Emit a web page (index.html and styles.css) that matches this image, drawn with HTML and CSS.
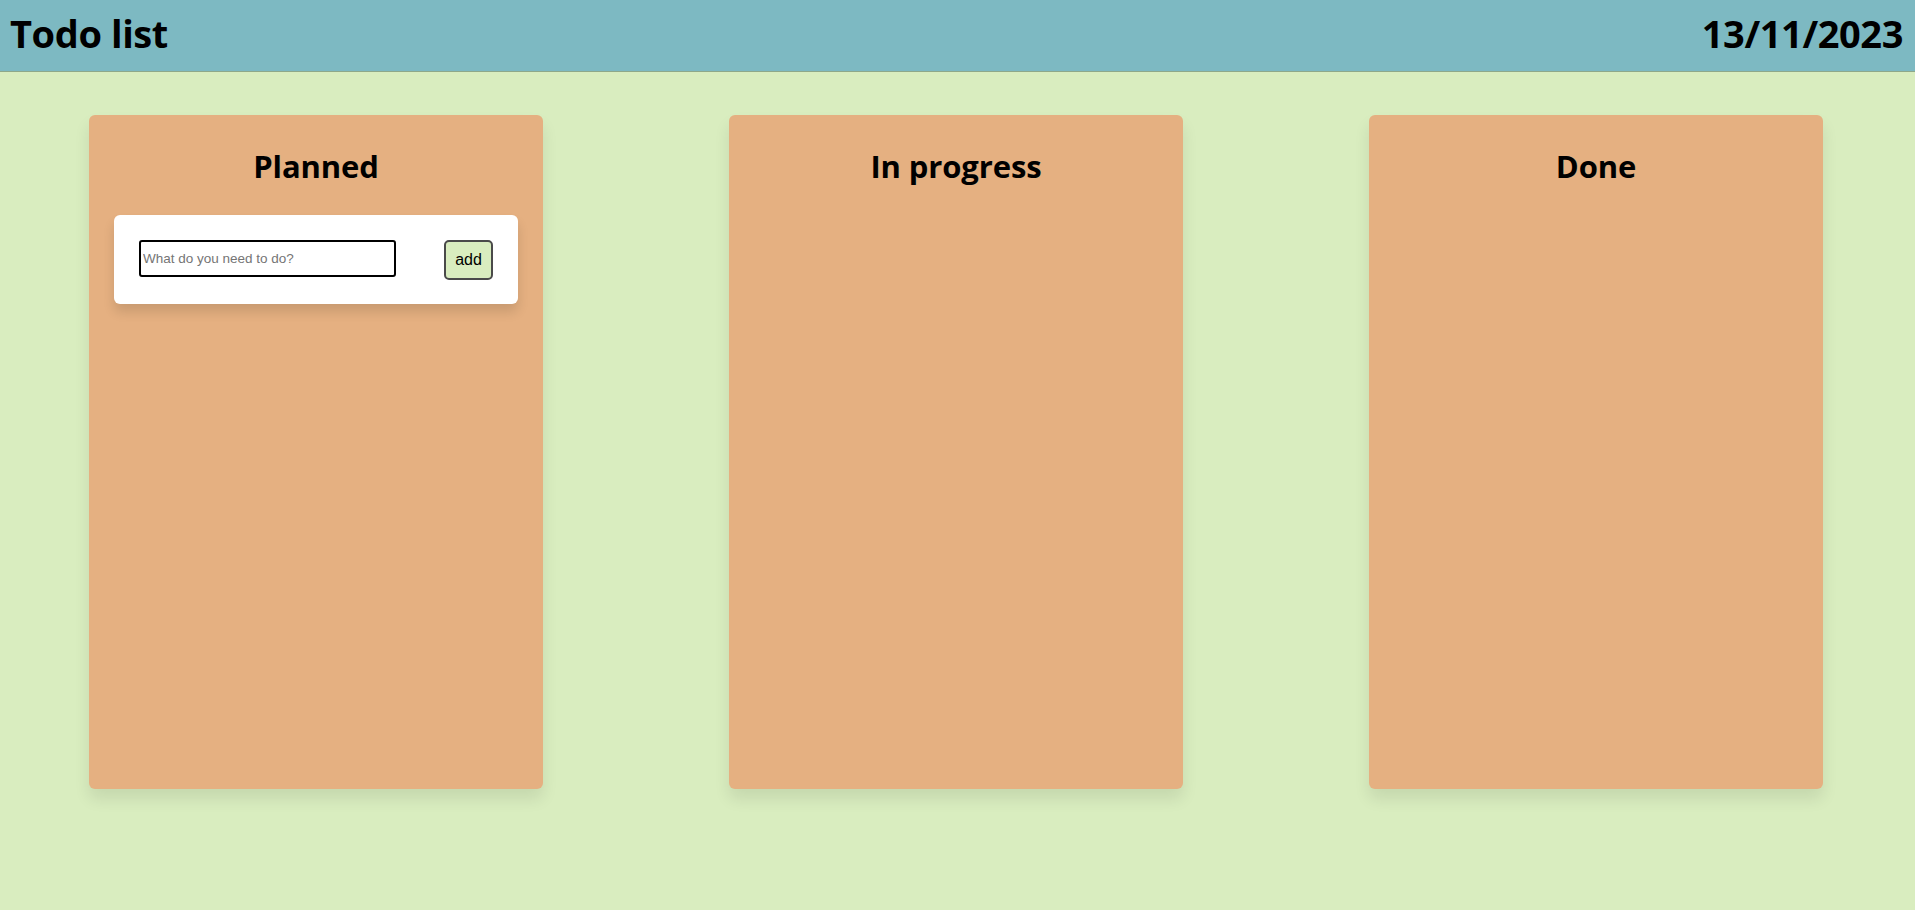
FILE: index.html
```html
<!DOCTYPE html>
<html lang="en">
<head>
<meta charset="utf-8">
<title>Todo list</title>
<link rel="stylesheet" href="styles.css">
</head>
<body>
<header class="topbar">
  <h1 class="topbar-title">Todo list</h1>
  <div class="topbar-date">13/11/2023</div>
</header>
<main class="board">
  <section class="column">
    <h2 class="column-title">Planned</h2>
    <form class="new-task" onsubmit="return false">
      <input class="new-task-input" type="text" placeholder="What do you need to do?">
      <button class="new-task-btn" type="submit">add</button>
    </form>
  </section>
  <section class="column">
    <h2 class="column-title">In progress</h2>
  </section>
  <section class="column">
    <h2 class="column-title">Done</h2>
  </section>
</main>
</body>
</html>
```
FILE: styles.css
```css
* { box-sizing: border-box; }

html, body {
  margin: 0;
  padding: 0;
}

body {
  background: #d9edbf;
  font-family: "Open Sans", "Liberation Sans", sans-serif;
  color: #000;
  min-height: 910px;
}

.topbar {
  height: 72px;
  background: #7db9c2;
  border-bottom: 1px solid #8ea88a;
  display: flex;
  justify-content: space-between;
  align-items: flex-start;
  padding: 6px 12px 0 10px;
}

.topbar-title,
.topbar-date {
  margin: 0;
  font-size: 38px;
  font-weight: 700;
  letter-spacing: -0.4px;
  line-height: 54px;
}

.board {
  display: flex;
  align-items: flex-start;
  gap: 186px;
  padding: 43px 0 0 89px;
}

.column {
  width: 454px;
  height: 674px;
  background: #e5b081;
  border-radius: 6px;
  padding: 1px 25px;
  box-shadow: 0 10px 16px rgba(0, 0, 0, 0.09);
}

.column-title {
  margin: 29px 0 28px;
  text-align: center;
  font-size: 31px;
  font-weight: 700;
  letter-spacing: -0.1px;
  line-height: 42px;
}

.new-task {
  background: #fff;
  border-radius: 6px;
  padding: 25px 25px 24px;
  display: flex;
  justify-content: space-between;
  align-items: flex-start;
  box-shadow: 0 8px 12px rgba(0, 0, 0, 0.12);
}

.new-task-input {
  width: 257px;
  height: 37px;
  border: 2px solid #000;
  border-radius: 3px;
  padding: 1px 2px;
  font-family: "Liberation Sans", Arial, sans-serif;
  font-size: 13.5px;
  outline: none;
}

.new-task-input::placeholder {
  color: #757575;
}

.new-task-btn {
  width: 49px;
  height: 40px;
  background: #d9edbf;
  border: 2px solid #4a4a4a;
  border-radius: 5px;
  font-family: "Liberation Sans", Arial, sans-serif;
  font-size: 16px;
  color: #000;
  padding: 0;
  cursor: pointer;
}
```
